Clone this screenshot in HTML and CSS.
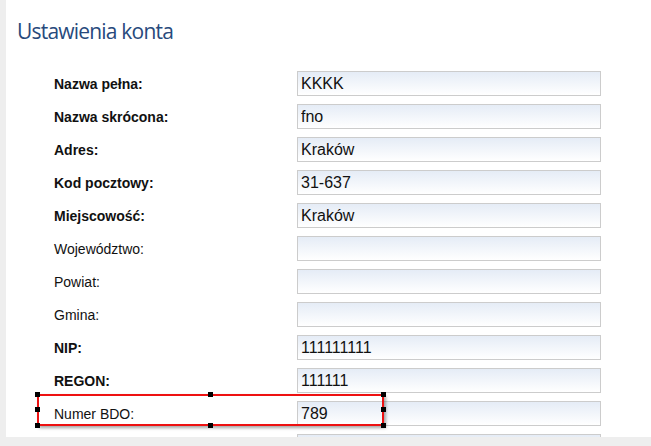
FILE: index.html
```html
<html>

<head>
    <title>Ustawienia konta</title>
    <link rel="stylesheet" href="styles.css">
</head>

<body>
    <div class="panel">
        <h1>Ustawienia konta</h1>
        <div class="form">
            <div class="row"><label class="req">Nazwa pełna:</label><input type="text" value="KKKK"></div>
            <div class="row"><label class="req">Nazwa skrócona:</label><input type="text" value="fno"></div>
            <div class="row"><label class="req">Adres:</label><input type="text" value="Kraków"></div>
            <div class="row"><label class="req">Kod pocztowy:</label><input type="text" value="31-637"></div>
            <div class="row"><label class="req">Miejscowość:</label><input type="text" value="Kraków"></div>
            <div class="row"><label>Województwo:</label><input type="text" value=""></div>
            <div class="row"><label>Powiat:</label><input type="text" value=""></div>
            <div class="row"><label>Gmina:</label><input type="text" value=""></div>
            <div class="row"><label class="req">NIP:</label><input type="text" value="111111111"></div>
            <div class="row"><label class="req">REGON:</label><input type="text" value="111111"></div>
            <div class="row selected">
                <label>Numer BDO:</label><input type="text" value="789">
                <div class="selection">
                    <span class="handle tl"></span><span class="handle tc"></span><span class="handle tr"></span>
                    <span class="handle ml"></span><span class="handle mr"></span>
                    <span class="handle bl"></span><span class="handle bc"></span><span class="handle br"></span>
                </div>
            </div>
            <div class="row"><label></label><input type="text" value=""></div>
        </div>
    </div>
</body>

</html>
```

FILE: styles.css
```css
body {
    margin: 0;
    background-color: #eeeeee;
    font-family: "Liberation Sans", Arial, sans-serif;
    color: #111;
}

.panel {
    margin-left: 6px;
    height: 437px;
    overflow: hidden;
    background-color: #fff;
}

h1 {
    margin: 0;
    padding: 16px 0 0 11px;
    font-family: "Open Sans", sans-serif;
    font-weight: 500;
    font-size: 21px;
    line-height: 30px;
    color: #27497c;
    letter-spacing: -0.8px;
}

.form {
    padding: 25px 0 0 48px;
}

.row {
    display: grid;
    grid-template-columns: 243px 304px;
    align-items: center;
    margin-bottom: 8px;
}

label {
    font-size: 14px;
    line-height: 16px;
}

label.req {
    font-weight: bold;
}

input {
    box-sizing: border-box;
    width: 304px;
    height: 25px;
    margin: 0;
    padding: 0 3px;
    border: 1px solid #cccccc;
    background: linear-gradient(#e5ecf6, #ffffff);
    font-family: "Liberation Sans", Arial, sans-serif;
    font-size: 16px;
    color: #111;
    outline: none;
}

.selected {
    position: relative;
}

.selection {
    position: absolute;
    top: -7px;
    left: -17px;
    width: 347px;
    height: 32px;
    box-sizing: border-box;
    border: 2px solid #ee1111;
    box-shadow: 2px 2px 3px rgba(0, 0, 0, 0.35);
}

.handle {
    position: absolute;
    width: 5px;
    height: 5px;
    background-color: #000;
}

.tl { top: -4px; left: -4px; }
.tc { top: -4px; left: 169px; }
.tr { top: -4px; right: -4px; }
.ml { top: 11px; left: -4px; }
.mr { top: 11px; right: -4px; }
.bl { bottom: -4px; left: -4px; }
.bc { bottom: -4px; left: 169px; }
.br { bottom: -4px; right: -4px; }
```
